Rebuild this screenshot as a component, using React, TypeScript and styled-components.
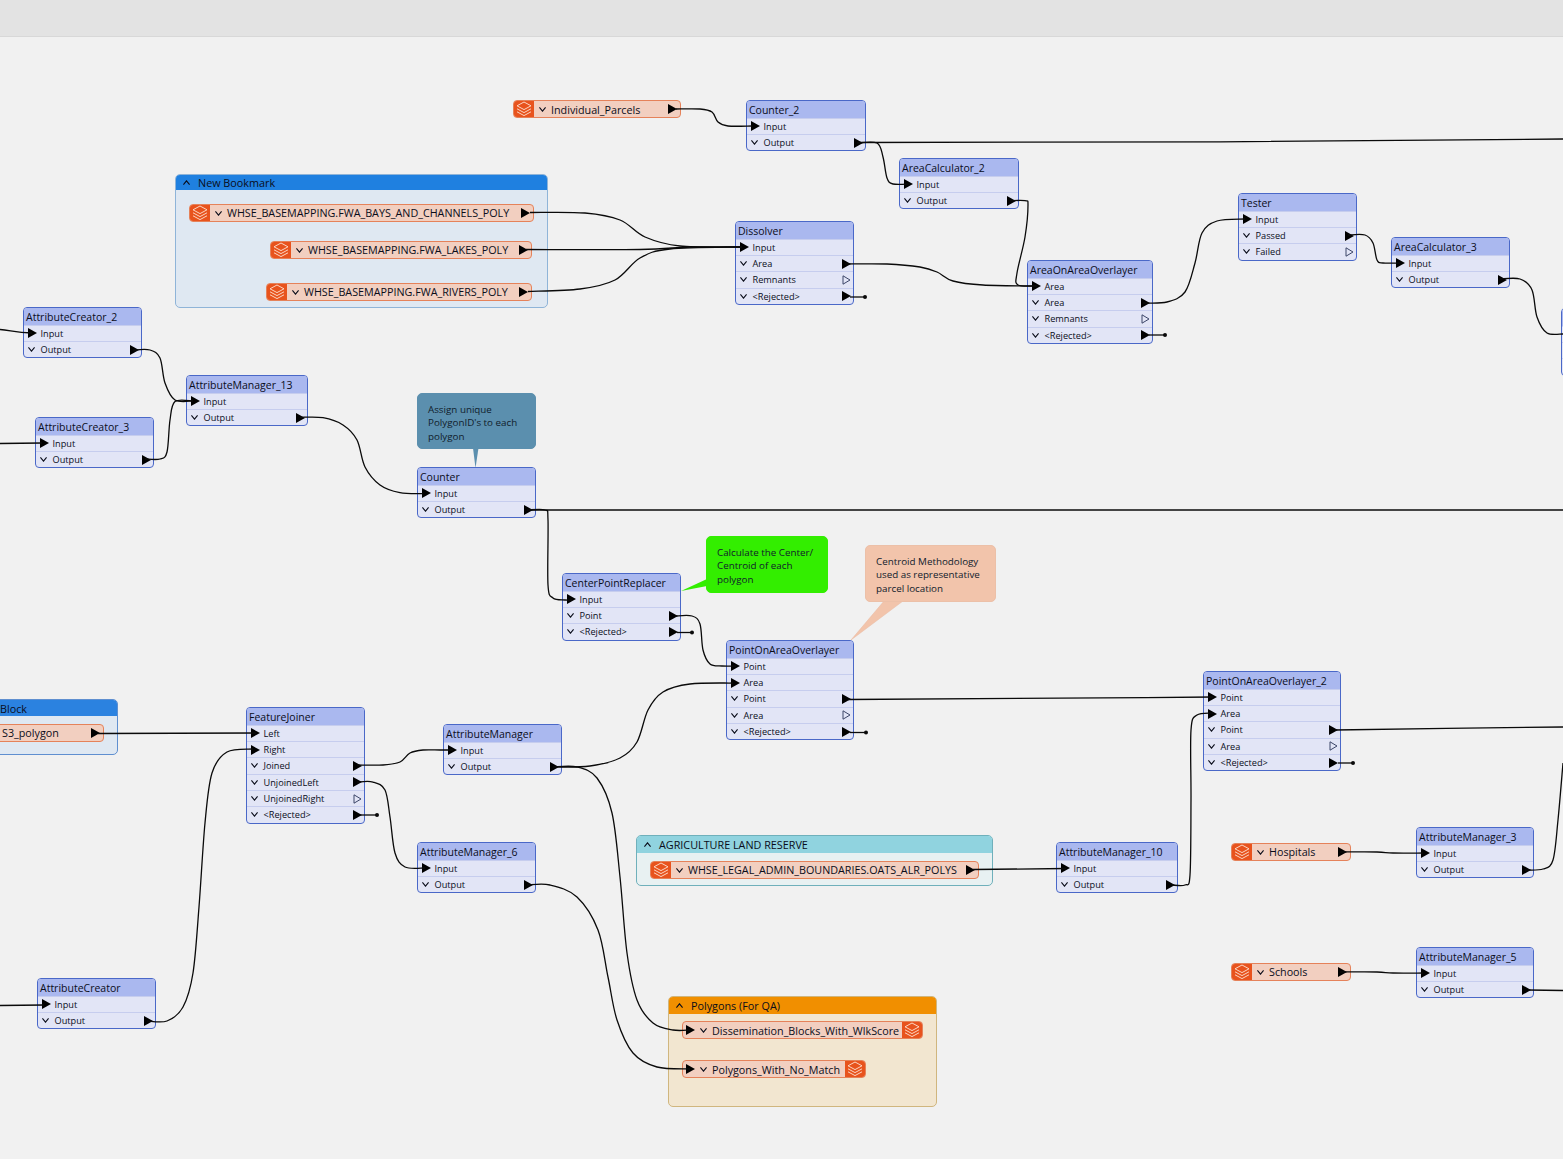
import React from "react";
import styled, { createGlobalStyle } from "styled-components";

const ORIGIN = 37;
const FONT = `"Open Sans", "Noto Sans", "Liberation Sans", sans-serif`;

const Global = createGlobalStyle`
  html, body { margin: 0; padding: 0; background: #f1f1f1; }
  body { font-family: ${FONT}; color: #0a0d1a; }
`;

const Page = styled.div`
  width: 1563px;
  height: 1159px;
  display: flex;
  flex-direction: column;
  overflow: hidden;
`;
const TopBar = styled.div`
  height: 36px;
  flex: none;
  background: #e3e3e3;
  border-bottom: 1px solid #d8d8d8;
`;
const Canvas = styled.div`
  position: relative;
  flex: 1;
  background: #f1f1f1;
  overflow: hidden;
`;
const Layer = styled.svg`
  position: absolute;
  left: 0;
  top: 0;
  pointer-events: none;
`;

type Pos = { $x: number; $y: number; $w: number };
const place = (p: Pos) => ({ style: { left: p.$x, top: p.$y - ORIGIN, width: p.$w } });

const NodeBox = styled.div.attrs<Pos>(place)<Pos>`
  position: absolute;
  box-sizing: border-box;
  border: 1px solid #4a68c8;
  border-radius: 4px;
  background: #e2e5f6;
  overflow: hidden;
`;
const NodeTitle = styled.div`
  height: 16.6px;
  line-height: 19px;
  padding-left: 2px;
  font-size: 10.5px;
  background: #aab8ef;
  white-space: nowrap;
`;
const Row = styled.div`
  position: relative;
  height: 16.35px;
  box-sizing: border-box;
  display: flex;
  align-items: center;
  border-top: 1px solid #c6cdee;
  font-size: 9.2px;
  white-space: nowrap;
`;
const PortLeft = styled.svg`
  flex: none;
  width: 9px;
  height: 10px;
  margin-left: 4px;
  margin-right: 3.5px;
`;
const Chev = styled.svg`
  flex: none;
  width: 7px;
  height: 5px;
  margin-left: 4px;
  margin-right: 5.5px;
`;
const RowLabel = styled.span`
  flex: 1;
`;
const PortRight = styled.svg`
  flex: none;
  width: 9px;
  height: 10px;
  margin-right: 2px;
`;

const Tri = ({ hollow, as: Cmp }: { hollow?: boolean; as: typeof PortLeft }) => (
  <Cmp viewBox="0 0 9 10">
    {hollow ? (
      <path d="M1 .8 8 5 1 9.2Z" fill="#e2e5f6" stroke="#3c4668" strokeWidth="1" />
    ) : (
      <path d="M0 0 9 5 0 10Z" fill="#000" />
    )}
  </Cmp>
);
const Chevron = () => (
  <Chev viewBox="0 0 7 5">
    <path d="M.4.4 3.5 4.2 6.6.4" fill="none" stroke="#0a0d1a" strokeWidth="1.1" />
  </Chev>
);

type RowDef = { t: string; i?: boolean; h?: boolean };
const IN = (t: string): RowDef => ({ t, i: true });
const OUT = (t: string): RowDef => ({ t });
const HOLLOW = (t: string): RowDef => ({ t, h: true });

type NodeDef = { n: string; x: number; y: number; w: number; r: RowDef[] };
const IO = [IN("Input"), OUT("Output")];
const R = "<Rejected>";
const nodes: NodeDef[] = [
  { n: "Counter_2", x: 746, y: 100, w: 120, r: IO },
  { n: "AreaCalculator_2", x: 899, y: 158, w: 120, r: IO },
  { n: "Dissolver", x: 735, y: 221, w: 119, r: [IN("Input"), OUT("Area"), HOLLOW("Remnants"), OUT(R)] },
  { n: "AreaOnAreaOverlayer", x: 1027, y: 260, w: 126, r: [IN("Area"), OUT("Area"), HOLLOW("Remnants"), OUT(R)] },
  { n: "Tester", x: 1238, y: 193, w: 119, r: [IN("Input"), OUT("Passed"), HOLLOW("Failed")] },
  { n: "AreaCalculator_3", x: 1391, y: 237, w: 119, r: IO },
  { n: "", x: 1561, y: 308, w: 119, r: [IN(""), OUT(""), OUT("")] },
  { n: "AttributeCreator_2", x: 23, y: 307, w: 119, r: IO },
  { n: "AttributeManager_13", x: 186, y: 375, w: 122, r: IO },
  { n: "AttributeCreator_3", x: 35, y: 417, w: 119, r: IO },
  { n: "Counter", x: 417, y: 467, w: 119, r: IO },
  { n: "CenterPointReplacer", x: 562, y: 573, w: 119, r: [IN("Input"), OUT("Point"), OUT(R)] },
  { n: "PointOnAreaOverlayer", x: 726, y: 640, w: 128, r: [IN("Point"), IN("Area"), OUT("Point"), HOLLOW("Area"), OUT(R)] },
  { n: "PointOnAreaOverlayer_2", x: 1203, y: 671, w: 138, r: [IN("Point"), IN("Area"), OUT("Point"), HOLLOW("Area"), OUT(R)] },
  { n: "FeatureJoiner", x: 246, y: 707, w: 119, r: [IN("Left"), IN("Right"), OUT("Joined"), OUT("UnjoinedLeft"), HOLLOW("UnjoinedRight"), OUT(R)] },
  { n: "AttributeManager", x: 443, y: 724, w: 119, r: IO },
  { n: "AttributeManager_6", x: 417, y: 842, w: 119, r: IO },
  { n: "AttributeManager_10", x: 1056, y: 842, w: 122, r: IO },
  { n: "AttributeManager_3", x: 1416, y: 827, w: 118, r: IO },
  { n: "AttributeManager_5", x: 1416, y: 947, w: 118, r: IO },
  { n: "AttributeCreator", x: 37, y: 978, w: 119, r: IO },
];

const Node = ({ d }: { d: NodeDef }) => (
  <NodeBox $x={d.x} $y={d.y} $w={d.w}>
    <NodeTitle>{d.n || "\u00a0"}</NodeTitle>
    {d.r.map((r, k) => (
      <Row key={k}>
        {r.i ? <Tri as={PortLeft} /> : <Chevron />}
        <RowLabel>{r.t}</RowLabel>
        {!r.i && <Tri as={PortRight} hollow={r.h} />}
      </Row>
    ))}
  </NodeBox>
);

/* bookmarks */
const BookmarkBox = styled.div.attrs<Pos & { $h: number }>((p) => ({
  style: { left: p.$x, top: p.$y - ORIGIN, width: p.$w, height: p.$h },
}))<Pos & { $h: number; $bg: string; $line: string }>`
  position: absolute;
  box-sizing: border-box;
  border: 1px solid ${(p) => p.$line};
  border-radius: 5px;
  background: ${(p) => p.$bg};
  overflow: hidden;
`;
const BookmarkHead = styled.div<{ $head: string; $pad: number; $tall: number }>`
  height: ${(p) => p.$tall}px;
  display: flex;
  align-items: center;
  gap: 8px;
  padding-left: ${(p) => p.$pad}px;
  font-size: 10.8px;
  white-space: nowrap;
  background: ${(p) => p.$head};
`;
const ChevUp = styled.svg`
  flex: none;
  width: 7px;
  height: 5px;
`;

type BmDef = { n: string; x: number; y: number; w: number; h: number; bg: string; head: string; line: string; tall: number };
const bookmarks: BmDef[] = [
  { n: "New Bookmark", x: 175, y: 174, w: 373, h: 134, bg: "#dfe8f2", head: "#1f80e0", line: "#8fb4d8", tall: 15 },
  { n: "Block", x: -14, y: 699, w: 132, h: 56, bg: "#dfe8f2", head: "#2b82e0", line: "#5f8fd0", tall: 16 },
  { n: "AGRICULTURE LAND RESERVE", x: 636, y: 835, w: 357, h: 51, bg: "#e8f1f2", head: "#90d3df", line: "#6fb0bb", tall: 16.5 },
  { n: "Polygons (For QA)", x: 668, y: 996, w: 269, h: 111, bg: "#f2e6d0", head: "#f18f00", line: "#d0b67e", tall: 16.5 },
];

const Bookmark = ({ d }: { d: BmDef }) => (
  <BookmarkBox $x={d.x} $y={d.y} $w={d.w} $h={d.h} $bg={d.bg} $line={d.line}>
    <BookmarkHead $head={d.head} $pad={d.n === "Block" ? 13 : 7} $tall={d.tall}>
      {d.n !== "Block" && (
        <ChevUp viewBox="0 0 7 5">
          <path d="M.4 4.6 3.5.8 6.6 4.6" fill="none" stroke="#0a0d1a" strokeWidth="1.1" />
        </ChevUp>
      )}
      <span>{d.n}</span>
    </BookmarkHead>
  </BookmarkBox>
);

/* feature types */
const FeatBox = styled.div.attrs<Pos>(place)<Pos>`
  position: absolute;
  box-sizing: border-box;
  height: 18px;
  display: flex;
  align-items: center;
  border: 1px solid #e5825a;
  border-radius: 4px;
  background: #f2cfc0;
  overflow: hidden;
  font-size: 10.75px;
  white-space: nowrap;
`;
const FeatIcon = styled.svg`
  flex: none;
  width: 20px;
  height: 18px;
  background: #e8531d;
`;
const FeatLabel = styled.span<{ $low?: boolean }>`
  flex: 1;
  padding-top: ${(p) => (p.$low ? 1 : 0)}px;
`;
const Layers = () => (
  <FeatIcon viewBox="0 0 20 18">
    <g fill="none" stroke="#fbd5c2" strokeWidth="1">
      <path d="M10 2 17 5.8 10 9.6 3 5.8Z" />
      <path d="M3 8.8 10 12.6 17 8.8" />
      <path d="M3 11.8 10 15.6 17 11.8" />
    </g>
  </FeatIcon>
);
const FeatChev = styled(Chev)`
  margin-left: 5px;
  margin-right: 5px;
`;
const WriterPort = styled(PortLeft)`
  margin-left: 3px;
  margin-right: 0;
`;
const ReaderPort = styled(PortRight)`
  margin-right: 3px;
`;
const chev = (
  <FeatChev viewBox="0 0 7 5">
    <path d="M.4.4 3.5 4.2 6.6.4" fill="none" stroke="#0a0d1a" strokeWidth="1.1" />
  </FeatChev>
);

type FeatDef = { n: string; x: number; y: number; w: number; writer?: boolean; low?: boolean };
const feats: FeatDef[] = [
  { n: "Individual_Parcels", x: 513, y: 100, w: 168, low: true },
  { n: "WHSE_BASEMAPPING.FWA_BAYS_AND_CHANNELS_POLY", x: 189, y: 204, w: 345 },
  { n: "WHSE_BASEMAPPING.FWA_LAKES_POLY", x: 270, y: 241, w: 262 },
  { n: "WHSE_BASEMAPPING.FWA_RIVERS_POLY", x: 266, y: 283, w: 266 },
  { n: "S3_polygon", x: -36, y: 724, w: 140 },
  { n: "WHSE_LEGAL_ADMIN_BOUNDARIES.OATS_ALR_POLYS", x: 650, y: 861, w: 329 },
  { n: "Hospitals", x: 1231, y: 843, w: 120 },
  { n: "Schools", x: 1231, y: 963, w: 120 },
  { n: "Dissemination_Blocks_With_WlkScore", x: 682, y: 1021, w: 241, writer: true, low: true },
  { n: "Polygons_With_No_Match", x: 682, y: 1060, w: 184, writer: true, low: true },
];

const Feat = ({ d }: { d: FeatDef }) => (
  <FeatBox $x={d.x} $y={d.y} $w={d.w}>
    {d.writer ? (
      <>
        <Tri as={WriterPort} />
        {chev}
        <FeatLabel $low={d.low}>{d.n}</FeatLabel>
        <Layers />
      </>
    ) : (
      <>
        <Layers />
        {chev}
        <FeatLabel $low={d.low}>{d.n}</FeatLabel>
        <Tri as={ReaderPort} />
      </>
    )}
  </FeatBox>
);

/* annotations */
const Note = styled.div.attrs<Pos & { $h: number }>((p) => ({
  style: { left: p.$x, top: p.$y - ORIGIN, width: p.$w, height: p.$h },
}))<Pos & { $h: number; $bg: string; $line: string }>`
  position: absolute;
  box-sizing: border-box;
  padding: 8.5px 4px 0 10px;
  border-radius: 5px;
  border: 1px solid ${(p) => p.$line};
  background: ${(p) => p.$bg};
  font-size: 9.8px;
  line-height: 13.7px;
  white-space: nowrap;
  color: #10202c;
`;

/* a smooth line through the given points (Catmull-Rom as cubic Béziers) */
type P = [number, number];
const through = (...p: P[]) => {
  let d = `M${p[0][0]} ${p[0][1]}`;
  for (let i = 0; i < p.length - 1; i++) {
    const a = p[Math.max(i - 1, 0)];
    const b = p[i];
    const c = p[i + 1];
    const e = p[Math.min(i + 2, p.length - 1)];
    const c1x = b[0] + (c[0] - a[0]) / 6;
    const c1y = b[1] + (c[1] - a[1]) / 6;
    const c2x = c[0] - (e[0] - b[0]) / 6;
    const c2y = c[1] - (e[1] - b[1]) / 6;
    d += `C${c1x} ${c1y} ${c2x} ${c2y} ${c[0]} ${c[1]}`;
  }
  return d;
};

const wires: string[] = [
  through([676, 109], [700, 109], [712, 112], [718, 122], [728, 126], [752, 126]),
  `M858 142.5C1000 142.5 1400 142 1563 139`,
  through([857, 143], [877, 143], [883, 157], [887, 178], [893, 184], [910, 184]),
  through([1010, 200.7], [1025, 200.7], [1028, 205], [1025, 237], [1017, 273], [1018, 285], [1037, 286]),
  through([530, 212.5], [585, 213], [620, 220], [645, 237], [680, 246], [742, 247]),
  through([526, 249.5], [640, 249.5], [690, 247], [742, 247]),
  through([528, 291.5], [580, 289], [615, 280], [640, 258], [670, 249], [742, 247]),
  through([845, 264], [887, 264], [920, 267], [937, 272], [953, 281], [983, 285], [1037, 286]),
  through([1143, 303], [1167, 302], [1185, 292], [1195, 263], [1202, 233], [1217, 221], [1245, 219]),
  through([1348, 235], [1365, 235], [1373, 243], [1377, 260], [1383, 263], [1400, 263]),
  through([1500, 279], [1520, 279], [1532, 290], [1537, 317], [1547, 333], [1563, 334]),
  `M0 329.5C10 330 15 333 32 333`,
  `M0 443.5L42 443`,
  `M0 1005.5L44 1005`,
  through([133, 350], [150, 350], [160, 358], [165, 383], [175, 400], [193, 401]),
  through([145, 459], [160, 459], [167, 452], [170, 420], [175, 401.5], [193, 401]),
  through([300, 417.3], [323, 417.7], [343, 425], [357, 440], [365, 467], [380, 485], [400, 492.7], [423, 493.7]),
  `M530 510H1563`,
  through([527, 510], [545, 510], [548, 520], [548, 585], [553, 598], [565, 600], [572, 600]),
  through([675, 616], [692, 616], [700, 624], [703, 650], [710, 664], [722, 666], [736, 666]),
  through([553, 767], [590, 766], [620, 758], [637, 742], [648, 710], [663, 692], [690, 684], [733, 683]),
  `M848 699.5C1000 698.5 1100 698 1213 697`,
  `M1335 730C1400 729 1500 727.5 1563 727`,
  `M973 869.5L1066 868.5`,
  through([1172, 885], [1185, 885], [1190, 875], [1191, 800], [1191, 730], [1197, 715], [1213, 713]),
  `M98 733.5L256 733`,
  through([147, 1021], [167, 1021], [183, 1007], [193, 973], [199, 907], [205, 823], [212, 773], [227, 752], [253, 749]),
  through([357, 765], [383, 765], [400, 762], [410, 753], [423, 750], [440, 750], [453, 750]),
  through([357, 782], [373, 782], [385, 790], [390, 817], [395, 853], [405, 867], [425, 868]),
  through([553, 767], [577, 767], [597, 778], [612, 813], [620, 877], [627, 953], [637, 1000], [653, 1023], [673, 1030], [690, 1030]),
  through([527, 885], [550, 885], [577, 897], [598, 930], [608, 977], [617, 1020], [633, 1053], [657, 1067], [690, 1069]),
  through([1340, 852], [1377, 852], [1393, 853], [1423, 853]),
  through([1525, 870], [1543, 869], [1553, 860], [1558, 820], [1563, 763]),
  through([1340, 972], [1377, 972], [1393, 973], [1423, 973]),
  `M1528 990L1563 990.5`,
  `M850 297H864`,
  `M1149 335H1165`,
  `M677 632.5H692`,
  `M850 732.5H866`,
  `M1338 763H1353`,
  `M360 815H376`,
];
const dots: [number, number][] = [
  [865, 297], [1165, 335], [692, 632.5], [866, 732.5], [1353, 763], [377, 815],
];

const VB = `0 ${ORIGIN} 1563 ${1159 - ORIGIN}`;

export default function App() {
  return (
    <Page>
      <Global />
      <TopBar />
      <Canvas>
        {bookmarks.map((b) => (
          <Bookmark key={b.n} d={b} />
        ))}
        <Layer width="1563" height={1159 - ORIGIN} viewBox={VB}>
          <path d="M473 448L478.5 448L475.5 468Z" fill="#5b8fae" />
          <path d="M707 579L707 586L681 591Z" fill="#33ee00" />
          <path d="M884 601L903 601L851 640Z" fill="#f2c4ab" stroke="#e8b9a0" strokeWidth=".5" />
        </Layer>
        <Note $x={417} $y={393} $w={119} $h={56} $bg="#5b8fae" $line="#5b8fae">
          Assign unique
          <br />
          PolygonID's to each
          <br />
          polygon
        </Note>
        <Note $x={706} $y={536} $w={122} $h={57} $bg="#33ee00" $line="#33ee00">
          Calculate the Center/
          <br />
          Centroid of each
          <br />
          polygon
        </Note>
        <Note $x={865} $y={545} $w={131} $h={57} $bg="#f2c4ab" $line="#ecc0a8">
          Centroid Methodology
          <br />
          used as representative
          <br />
          parcel location
        </Note>
        {feats.map((f) => (
          <Feat key={f.n} d={f} />
        ))}
        {nodes.map((n, k) => (
          <Node key={k} d={n} />
        ))}
        <Layer width="1563" height={1159 - ORIGIN} viewBox={VB}>
          {wires.map((d, k) => (
            <path key={k} d={d} fill="none" stroke="#0a0a0a" strokeWidth="1.3" />
          ))}
          {dots.map(([x, y], k) => (
            <circle key={k} cx={x} cy={y} r="2" fill="#0a0a0a" />
          ))}
        </Layer>
      </Canvas>
    </Page>
  );
}
